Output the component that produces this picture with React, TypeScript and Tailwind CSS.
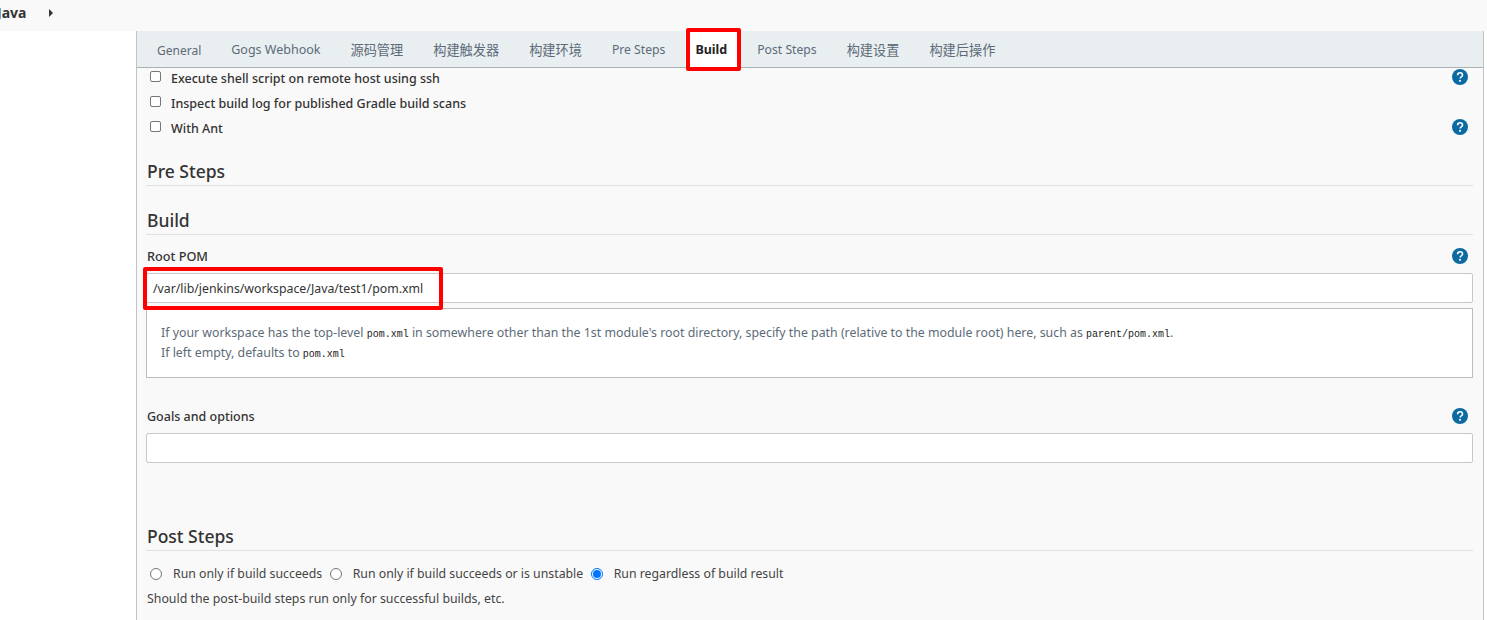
const font = { fontFamily: '"Noto Sans", "Noto Sans CJK SC", sans-serif' };

const tabs = [
  { label: "General", size: "text-[12px]" },
  { label: "Gogs Webhook", size: "text-[12.5px]" },
  { label: "源码管理", size: "text-[13.2px]" },
  { label: "构建触发器", size: "text-[13.2px]" },
  { label: "构建环境", size: "text-[13.2px]" },
  { label: "Pre Steps", size: "text-[12.2px]" },
  { label: "Build", size: "text-[12.5px]", active: true },
  { label: "Post Steps", size: "text-[12.2px]" },
  { label: "构建设置", size: "text-[13.2px]" },
  { label: "构建后操作", size: "text-[13.2px]" },
];

function Help({ className = "" }: { className?: string }) {
  return (
    <svg width="16" height="16" viewBox="0 0 16 16" className={"shrink-0 " + className}>
      <circle cx="8" cy="8" r="8" fill="#0b6aa2" />
      <path d="M5.6 6.2c0-1.5 1.1-2.4 2.5-2.4s2.4.8 2.4 2.1c0 1-.6 1.5-1.3 2-.6.4-.9.7-.9 1.4v.3" fill="none" stroke="#fff" strokeWidth="1.6" />
      <rect x="7.1" y="10.9" width="1.8" height="1.8" fill="#fff" />
    </svg>
  );
}

function CheckRow({ label, help }: { label: string; help?: boolean }) {
  return (
    <div className="flex h-[25px] items-center pl-[4px] pr-[5px]">
      <span className="mb-[6px] mr-[10px] h-[11px] w-[11px] rounded-[2px] border border-[#767676] bg-white" />
      <span className="flex-1 text-[12.5px] font-medium text-[#333]">{label}</span>
      {help && <Help className="mb-[5px]" />}
    </div>
  );
}

function SectionTitle({ children, className = "" }: { children: string; className?: string }) {
  return (
    <h3 className={"border-b border-[#e1e1e1] pl-[1px] text-[17.5px] leading-[27px] font-medium text-[#333] " + className}>
      {children}
    </h3>
  );
}

function Radio({ label, checked }: { label: string; checked?: boolean }) {
  return (
    <span className="flex items-center">
      <span
        className={
          "mx-[4px] flex h-[12px] w-[12px] items-center justify-center rounded-full border bg-white " +
          (checked ? "border-[#0075ff]" : "border-[#767676]")
        }
      >
        {checked && <span className="h-[8px] w-[8px] rounded-full bg-[#0075ff]" />}
      </span>
      <span className="ml-[7px] text-[12.3px] text-[#444]">{label}</span>
    </span>
  );
}

function Mono({ children }: { children: string }) {
  return <code className="font-['Liberation_Mono',monospace] text-[10px] leading-none text-[#222]">{children}</code>;
}

export default function App() {
  return (
    <div style={font} className="h-[620px] w-[1487px] overflow-hidden bg-white">
      <div className="flex h-[31px] items-start bg-[#f9f9f9]">
        <span className="ml-[-3px] mt-[2px] text-[14px] font-bold text-[#333]">Java</span>
        <span className="ml-[23px] mt-[9px] h-0 w-0 border-y-[4px] border-l-[4px] border-y-transparent border-l-[#333]" />
      </div>
      <div className="ml-[136px] mr-[3px] h-[589px] border-x border-[#c4c4c4] bg-[#f9f9f9]">
        <div className="relative flex h-[37px] border-b border-[#a9b1b5] bg-[#e9eef1] pl-[5px]">
          {tabs.map((t) =>
            t.active ? (
              <div key={t.label} className={"mx-[5px] flex items-center bg-white px-[10px] pt-[3px] font-bold text-[#222] " + t.size}>
                {t.label}
              </div>
            ) : (
              <div key={t.label} className={"flex items-center px-[15px] pt-[3px] text-[#5d6b78] " + t.size}>
                {t.label}
              </div>
            ),
          )}
          <div className="absolute left-[549px] top-[-3px] h-[43px] w-[55px] rounded-[2px] border-[4px] border-[#ff0000]" />
        </div>

        <div className="pl-[9px] pr-[10px]">
          <div className="-mt-[1px]">
            <CheckRow label="Execute shell script on remote host using ssh" help />
            <CheckRow label="Inspect build log for published Gradle build scans" />
            <CheckRow label="With Ant" help />
          </div>

          <SectionTitle className="mt-[16px]">Pre Steps</SectionTitle>
          <SectionTitle className="mt-[21px]">Build</SectionTitle>

          <div className="mt-[12px] flex h-[18px] items-center justify-between pl-[1px] pr-[5px]">
            <span className="mt-[2px] text-[12.7px] font-medium text-[#333]">Root POM</span>
            <Help />
          </div>
          <div className="relative mt-[8px]">
            <div className="flex h-[30px] items-center rounded-[2px] border border-[#c8c8c8] bg-white pl-[6px] pt-[3px] text-[12.3px] text-[#333]">
              /var/lib/jenkins/workspace/Java/test1/pom.xml
            </div>
            <div className="absolute left-[-3px] top-[-6px] h-[43px] w-[300px] rounded-[2px] border-[4px] border-[#ff0000]" />
          </div>
          <div className="mt-[5px] h-[70px] border border-[#bdbdbd] bg-white pl-[14px] pt-[14px] text-[12.35px] leading-[20px] text-[#5d6b78]">
            <div>
              If your workspace has the top-level <Mono>pom.xml</Mono> in somewhere other than the 1st module's root
              directory, specify the path (relative to the module root) here, such as <Mono>parent/pom.xml</Mono>.
            </div>
            <div>
              If left empty, defaults to <Mono>pom.xml</Mono>
            </div>
          </div>

          <div className="mt-[29px] flex h-[18px] items-center justify-between pl-[1px] pr-[5px]">
            <span className="mt-[2px] text-[12.5px] font-medium text-[#333]">Goals and options</span>
            <Help />
          </div>
          <div className="mt-[8px] h-[30px] rounded-[2px] border border-[#c8c8c8] bg-white" />

          <SectionTitle className="mt-[60px]">Post Steps</SectionTitle>
          <div className="mt-[14px] flex h-[18px] items-center gap-[3.5px]">
            <Radio label="Run only if build succeeds" />
            <Radio label="Run only if build succeeds or is unstable" />
            <Radio label="Run regardless of build result" checked />
          </div>
          <p className="mt-[7px] pl-[1px] text-[12.35px] leading-[18px] text-[#444]">
            Should the post-build steps run only for successful builds, etc.
          </p>
        </div>
      </div>
    </div>
  );
}
